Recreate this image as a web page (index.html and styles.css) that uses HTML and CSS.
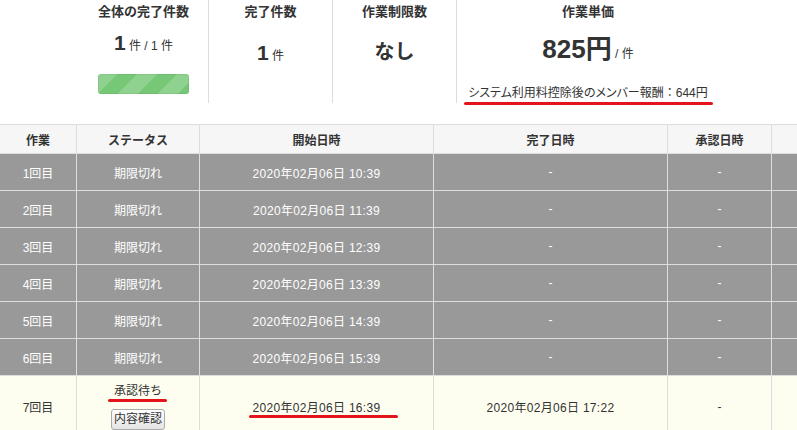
FILE: index.html
```html
<!DOCTYPE html>
<html lang="ja">

<head>
    <meta charset="UTF-8">
    <meta name="viewport" content="width=device-width, initial-scale=1.0">
    <title>作業状況</title>
    <link rel="stylesheet" href="styles.css">
</head>

<body>
    <div class="stats">
        <div class="stat stat-total">
            <div class="stat-title">全体の完了件数</div>
            <div class="stat-value"><b class="num">1</b> <span class="unit">件 / 1 件</span></div>
            <div class="progress"></div>
        </div>
        <div class="stat stat-done">
            <div class="stat-title">完了件数</div>
            <div class="stat-value"><b class="num">1</b> <span class="unit">件</span></div>
        </div>
        <div class="stat stat-limit">
            <div class="stat-title">作業制限数</div>
            <div class="stat-value"><b class="none">なし</b></div>
        </div>
        <div class="stat stat-price">
            <div class="stat-title">作業単価</div>
            <div class="stat-value"><b class="price">825円</b> <span class="unit">/ 件</span></div>
            <div class="member"><span class="mark mark-member">システム利用料控除後のメンバー報酬<span class="colon">：</span>644円</span></div>
        </div>
    </div>

    <table class="tasks">
        <tr>
            <th class="c1">作業</th>
            <th class="c2">ステータス</th>
            <th class="c3">開始日時</th>
            <th class="c4">完了日時</th>
            <th class="c5">承認日時</th>
            <th class="c6"></th>
        </tr>
        <tr class="expired">
            <td>1回目</td><td>期限切れ</td><td class="date">2020年02月06日 10:39</td><td>-</td><td>-</td><td></td>
        </tr>
        <tr class="expired">
            <td>2回目</td><td>期限切れ</td><td class="date">2020年02月06日 11:39</td><td>-</td><td>-</td><td></td>
        </tr>
        <tr class="expired">
            <td>3回目</td><td>期限切れ</td><td class="date">2020年02月06日 12:39</td><td>-</td><td>-</td><td></td>
        </tr>
        <tr class="expired">
            <td>4回目</td><td>期限切れ</td><td class="date">2020年02月06日 13:39</td><td>-</td><td>-</td><td></td>
        </tr>
        <tr class="expired">
            <td>5回目</td><td>期限切れ</td><td class="date">2020年02月06日 14:39</td><td>-</td><td>-</td><td></td>
        </tr>
        <tr class="expired">
            <td>6回目</td><td>期限切れ</td><td class="date">2020年02月06日 15:39</td><td>-</td><td>-</td><td></td>
        </tr>
        <tr class="waiting">
            <td>7回目</td>
            <td>
                <div class="status"><span class="mark mark-status">承認待ち</span></div>
                <button class="check">内容確認</button>
            </td>
            <td class="date"><span class="mark mark-date">2020年02月06日 16:39</span></td>
            <td class="date">2020年02月06日 17:22</td>
            <td>-</td>
            <td></td>
        </tr>
    </table>
</body>

</html>
```

FILE: styles.css
```css
body{
    margin: 0;
    overflow: hidden;
    color: #333;
    font-family: "Liberation Sans", "Noto Sans CJK JP", sans-serif;
    font-size: 12px;
}
.stats{
    display: flex;
    height: 103px;
    margin-left: 79px;
}
.stat{
    text-align: center;
    padding-top: 2px;
    box-sizing: border-box;
    border-right: 1px solid #ddd;
}
.stat-total{
    width: 130px;
}
.stat-done,
.stat-limit{
    width: 124px;
}
.stat-price{
    width: 262px;
    border-right: none;
}
.stat-title{
    font-size: 13px;
    font-weight: bold;
    line-height: 20px;
}
.stat-value{
    line-height: 26px;
}
.stat-total .stat-value{
    margin-top: 8px;
}
.stat-done .stat-value{
    margin-top: 18px;
}
.stat-limit .stat-value{
    margin-top: 17px;
}
.stat-price .stat-value{
    margin-top: 12px;
    line-height: 30px;
}
.num{
    font-size: 21px;
}
.none{
    font-size: 20px;
}
.price{
    font-size: 26px;
}
.unit{
    font-size: 12px;
}
.progress{
    width: 91px;
    height: 20px;
    margin: 15px auto 0;
    border-radius: 3px;
    background-color: #76c776;
    background-image: linear-gradient(135deg, rgba(255,255,255,.18) 25%, transparent 25%, transparent 50%, rgba(255,255,255,.18) 50%, rgba(255,255,255,.18) 75%, transparent 75%, transparent);
    background-size: 40px 40px;
    box-shadow: inset 0 0 0 1px rgba(0,0,0,.05);
}
.member{
    margin-top: 16px;
    line-height: 16px;
    font-feature-settings: "palt";
}
.colon{
    font-feature-settings: normal;
}
.mark{
    position: relative;
}
.mark::after{
    content: "";
    position: absolute;
    height: 3px;
    border-radius: 2px;
    background: #e3141b;
}
.mark-member::after{
    left: -4px;
    right: -5px;
    bottom: -5px;
}
.mark-status::after{
    left: -6px;
    right: -5px;
    bottom: -4px;
}
.mark-date::after{
    left: -4px;
    right: -18px;
    bottom: -3px;
}

.tasks{
    margin-top: 21px;
    border-collapse: separate;
    border-spacing: 0;
    table-layout: fixed;
    width: 972px;
    border-top: 1px solid #ddd;
}
.tasks th,
.tasks td{
    box-sizing: border-box;
    padding: 0;
    text-align: center;
    border-right: 1px solid #ddd;
    border-bottom: 1px solid #ddd;
}
.tasks th{
    height: 29px;
    background: #f6f6f6;
    font-size: 12px;
    font-weight: bold;
}
.c1{ width: 77px; }
.c2{ width: 123px; }
.c3{ width: 234px; }
.c4{ width: 234px; }
.c5{ width: 104px; }
.c6{ width: 200px; }
.date{
    letter-spacing: 0.3px;
}
.expired td{
    height: 37px;
    background: #999;
    color: #fff;
}
.waiting td{
    height: 62px;
    background: #fefef0;
}
.status{
    line-height: 16px;
}
.check{
    margin-top: 10px;
    padding: 1px 2px;
    font-family: inherit;
    font-size: 12px;
    line-height: 17px;
    color: #333;
    border: 1px solid #aaa;
    border-radius: 3px;
    background: linear-gradient(#fff, #e4e4e4);
}
```
